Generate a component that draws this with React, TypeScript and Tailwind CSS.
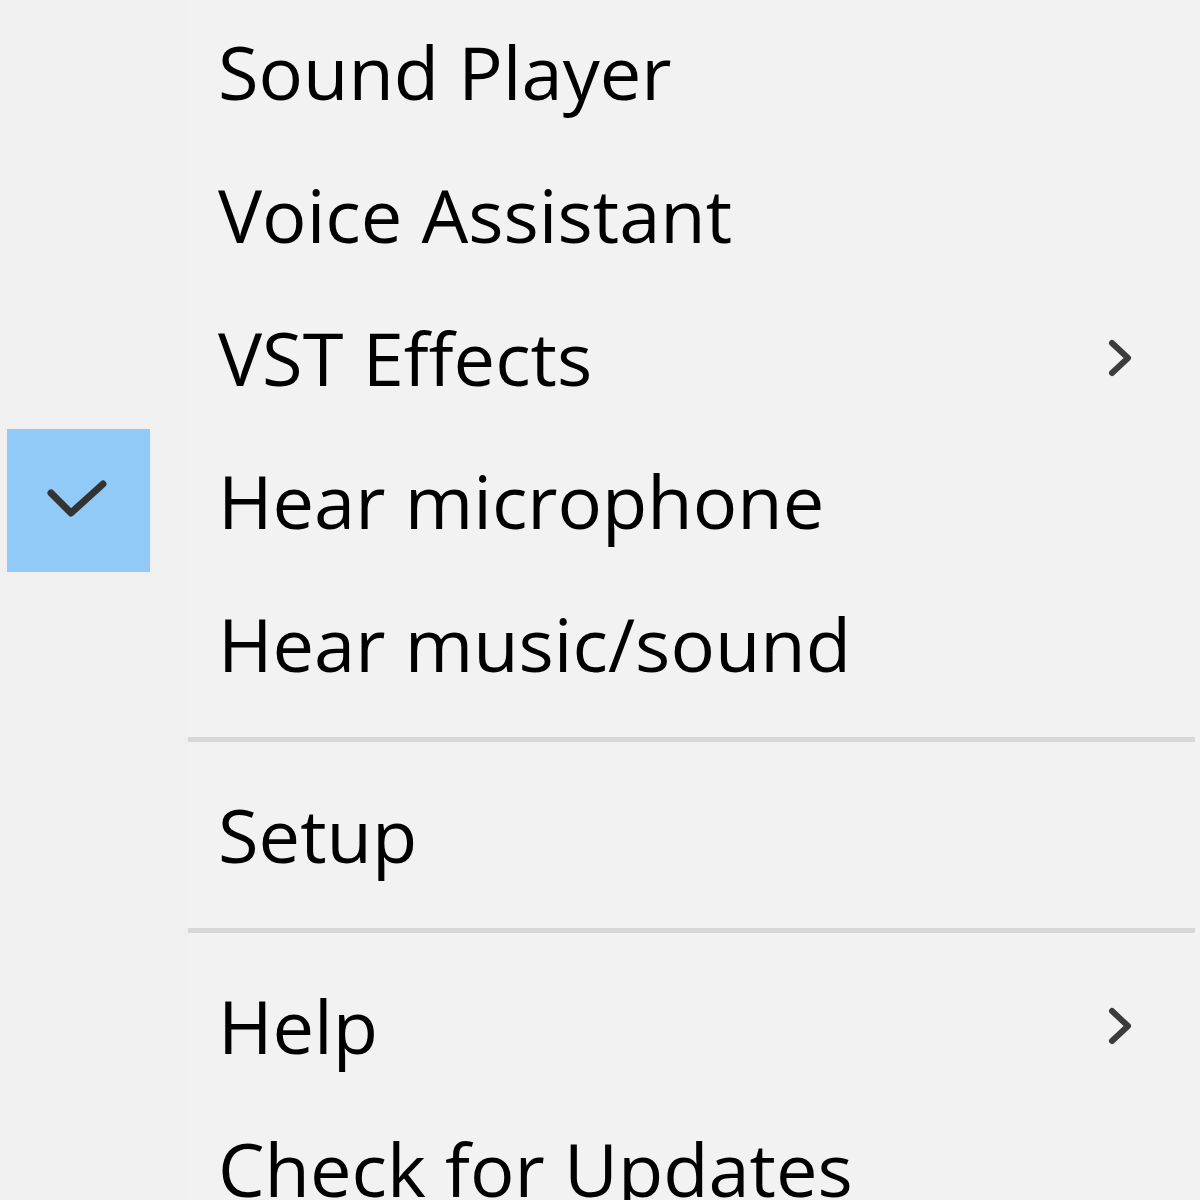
import React from "react";

type Item = { label: string; sub?: boolean; checked?: boolean } | { sep: true };

const items: Item[] = [
  { label: "Sound Player" },
  { label: "Voice Assistant" },
  { label: "VST Effects", sub: true },
  { label: "Hear microphone", checked: true },
  { label: "Hear music/sound" },
  { sep: true },
  { label: "Setup" },
  { sep: true },
  { label: "Help", sub: true },
  { label: "Check for Updates" },
];

function Chevron() {
  return (
    <svg width="40" height="50" viewBox="0 0 40 50" className="mr-[58px]">
      <path d="M10 10 L26 25 L10 40" fill="none" stroke="#3c3c3c" strokeWidth="6" strokeLinecap="round" strokeLinejoin="round" />
    </svg>
  );
}

function Check() {
  return (
    <svg width="80" height="60" viewBox="0 0 80 60">
      <path d="M12 22 L32 42 L64 13" fill="none" stroke="#333" strokeWidth="7" strokeLinecap="round" strokeLinejoin="round" />
    </svg>
  );
}

export default function App() {
  return (
    <div
      className="w-[1200px] h-[1200px] overflow-hidden bg-[#f2f2f2] flex flex-col"
      style={{ fontFamily: '"Open Sans", "Noto Sans", sans-serif' }}
    >
      {items.map((it, i) =>
        "sep" in it ? (
          <div key={i} className="h-[48px] shrink-0 flex items-center">
            <div className="w-[188px] h-full bg-[#f0f0f0]" />
            <div className="flex-1 h-[5px] bg-[#d7d7d7] mr-[5px]" />
          </div>
        ) : (
          <div key={i} className="h-[143px] shrink-0 flex items-center">
            <div className="w-[188px] h-full flex items-center bg-[#f0f0f0]">
              {it.checked ? (
                <div className="ml-[7px] w-[143px] h-[143px] bg-[#91c9f7] flex items-center justify-center">
                  <Check />
                </div>
              ) : null}
            </div>
            <div className="flex-1 pl-[30px] text-[74px] font-medium leading-none text-black">{it.label}</div>
            {it.sub ? <Chevron /> : null}
          </div>
        )
      )}
    </div>
  );
}
